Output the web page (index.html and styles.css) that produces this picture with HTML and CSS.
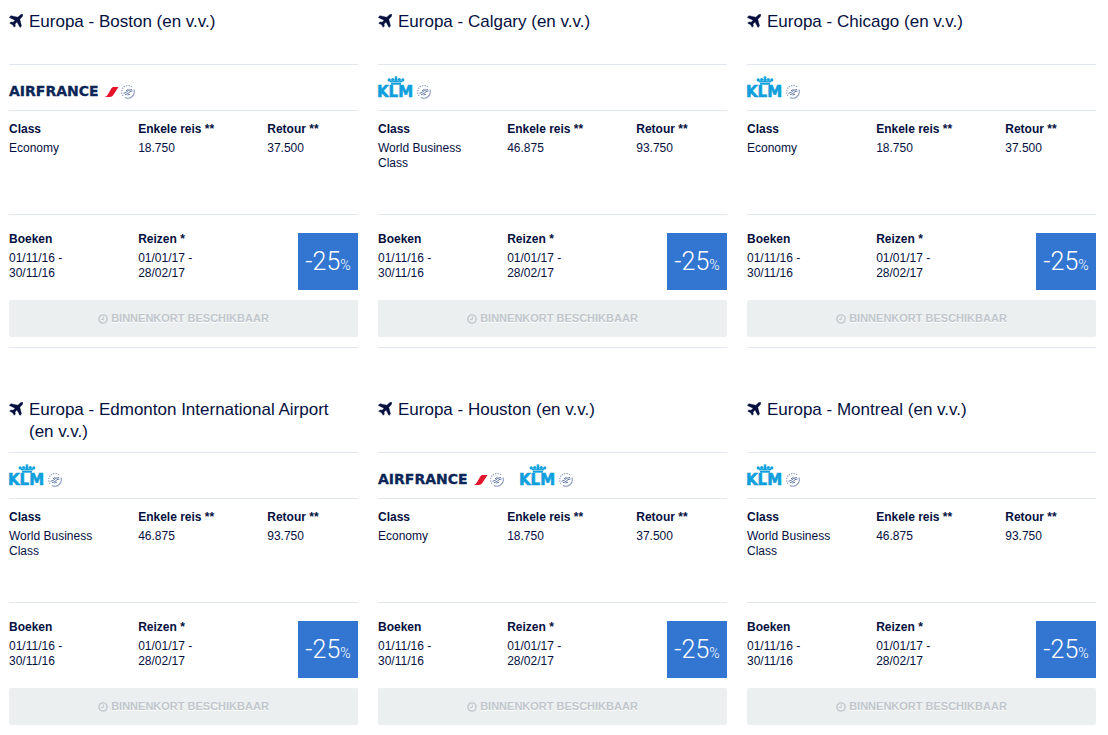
FILE: index.html
```html
<!DOCTYPE html>
<html lang="nl">
<head>
<meta charset="utf-8">
<title>Promo Awards</title>
<link rel="stylesheet" href="styles.css">
</head>
<body>
<svg class="sprite" aria-hidden="true">
  <symbol id="plane" viewBox="0 0 14 14">
    <path d="M13.700.3c.5 1-.2 2.200-1 3L10.800 5.200l1.700 6.800-1.500 1.400-3-5.300-2 1.900.4 2.100-1.200 1.200-1.600-2.600L.7 9.200l1.200-1.300 2.200.3 2-2L.3 3.400 1.900 1.700l6.900 1.500 2-1.800C11.600.6 12.900-.1 13.700.3z" stroke="#05103f" stroke-width=".4"/>
  </symbol>
  <symbol id="clock" viewBox="0 0 10 10">
    <circle cx="5" cy="5" r="4.100" fill="none" stroke="currentColor" stroke-width="1.400"/>
    <path d="M5.300 2.500v3H3" fill="none" stroke="currentColor" stroke-width="1"/>
  </symbol>
  <symbol id="skyteam" viewBox="0 0 15 15">
    <g fill="none" stroke="#8d9fc0">
      <path d="M13.900 5.500A6.400 6.400 0 0 1 5 13.400" stroke-width="1.100"/>
      <path d="M3 11.800A6.400 6.400 0 0 1 12.200 3" stroke-width="1.200" stroke-dasharray="1.300 1.100"/>
      <path d="M3.500 9.300 6.500 8.300 8.500 6.300l3.500-.8M5 10.800l3-1.300L10 7.600l2.500-.6M7.500 11l2.500-.8M6 6.800l2.500-1.500" stroke="#6177a5" stroke-width="1"/>
    </g>
  </symbol>
  <symbol id="af-accent" viewBox="0 0 16 10">
    <path d="M0 10c2-.2 2.800-1 4-2.800L7 2C7.800.6 8.500 0 10 0h4.500L9.500 7.800C8.400 9.500 7.500 10 5.500 10z" fill="#e4152b"/>
  </symbol>
  <symbol id="crown" viewBox="0 0 18 9">
    <g fill="#109fdc">
      <path d="M4 7h10v1.700H4z"/>
      <path d="M2.300 4.500h2.500L6 5.500l1-1h4l1 1 1.200-1h2.500L14.500 6.600h-11z"/>
      <circle cx="2.200" cy="3.900" r="1.600"/><circle cx="5.700" cy="3.600" r="1.500"/>
      <circle cx="12.300" cy="3.600" r="1.500"/><circle cx="15.800" cy="3.900" r="1.600"/>
      <circle cx="9" cy="3.400" r="1.600"/><path d="M8.500 0h1v.8h1v1h-1V3h-1V1.800h-1v-1h1z"/>
    </g>
  </symbol>
</svg>

<main class="offers">
  <article class="card">
    <h2 class="title"><svg class="plane" aria-hidden="true"><use href="#plane"/></svg>Europa - Boston (en v.v.)</h2>
    <div class="logos">
      <svg class="airfrance" viewBox="0 0 126 24" role="img" aria-label="Air France"><text x="0" y="20">AIRFRANCE</text><use href="#af-accent" x="95" y="11" width="16" height="10"/><use href="#skyteam" x="111" y="8" width="15" height="15"/></svg>
    </div>
    <div class="facts fares">
      <dl><dt>Class</dt><dd>Economy</dd></dl>
      <dl><dt>Enkele reis **</dt><dd>18.750</dd></dl>
      <dl><dt>Retour **</dt><dd>37.500</dd></dl>
    </div>
    <div class="facts dates">
      <dl><dt>Boeken</dt><dd>01/11/16 -<br>30/11/16</dd></dl>
      <dl><dt>Reizen *</dt><dd>01/01/17 -<br>28/02/17</dd></dl>
      <p class="badge">-25<small>%</small></p>
    </div>
    <button class="soon" type="button"><svg class="clock" aria-hidden="true"><use href="#clock"/></svg>BINNENKORT BESCHIKBAAR</button>
  </article>

  <article class="card">
    <h2 class="title"><svg class="plane" aria-hidden="true"><use href="#plane"/></svg>Europa - Calgary (en v.v.)</h2>
    <div class="logos">
      <svg class="klm" viewBox="0 0 54 24" role="img" aria-label="KLM"><use href="#crown" x="9" y="0" width="18" height="9"/><text x="-1" y="21">KLM</text><use href="#skyteam" x="38" y="8" width="15" height="15"/></svg>
    </div>
    <div class="facts fares">
      <dl><dt>Class</dt><dd>World Business Class</dd></dl>
      <dl><dt>Enkele reis **</dt><dd>46.875</dd></dl>
      <dl><dt>Retour **</dt><dd>93.750</dd></dl>
    </div>
    <div class="facts dates">
      <dl><dt>Boeken</dt><dd>01/11/16 -<br>30/11/16</dd></dl>
      <dl><dt>Reizen *</dt><dd>01/01/17 -<br>28/02/17</dd></dl>
      <p class="badge">-25<small>%</small></p>
    </div>
    <button class="soon" type="button"><svg class="clock" aria-hidden="true"><use href="#clock"/></svg>BINNENKORT BESCHIKBAAR</button>
  </article>

  <article class="card">
    <h2 class="title"><svg class="plane" aria-hidden="true"><use href="#plane"/></svg>Europa - Chicago (en v.v.)</h2>
    <div class="logos">
      <svg class="klm" viewBox="0 0 54 24" role="img" aria-label="KLM"><use href="#crown" x="9" y="0" width="18" height="9"/><text x="-1" y="21">KLM</text><use href="#skyteam" x="38" y="8" width="15" height="15"/></svg>
    </div>
    <div class="facts fares">
      <dl><dt>Class</dt><dd>Economy</dd></dl>
      <dl><dt>Enkele reis **</dt><dd>18.750</dd></dl>
      <dl><dt>Retour **</dt><dd>37.500</dd></dl>
    </div>
    <div class="facts dates">
      <dl><dt>Boeken</dt><dd>01/11/16 -<br>30/11/16</dd></dl>
      <dl><dt>Reizen *</dt><dd>01/01/17 -<br>28/02/17</dd></dl>
      <p class="badge">-25<small>%</small></p>
    </div>
    <button class="soon" type="button"><svg class="clock" aria-hidden="true"><use href="#clock"/></svg>BINNENKORT BESCHIKBAAR</button>
  </article>

  <article class="card">
    <h2 class="title"><svg class="plane" aria-hidden="true"><use href="#plane"/></svg>Europa - Edmonton International Airport (en v.v.)</h2>
    <div class="logos">
      <svg class="klm" viewBox="0 0 54 24" role="img" aria-label="KLM"><use href="#crown" x="9" y="0" width="18" height="9"/><text x="-1" y="21">KLM</text><use href="#skyteam" x="38" y="8" width="15" height="15"/></svg>
    </div>
    <div class="facts fares">
      <dl><dt>Class</dt><dd>World Business Class</dd></dl>
      <dl><dt>Enkele reis **</dt><dd>46.875</dd></dl>
      <dl><dt>Retour **</dt><dd>93.750</dd></dl>
    </div>
    <div class="facts dates">
      <dl><dt>Boeken</dt><dd>01/11/16 -<br>30/11/16</dd></dl>
      <dl><dt>Reizen *</dt><dd>01/01/17 -<br>28/02/17</dd></dl>
      <p class="badge">-25<small>%</small></p>
    </div>
    <button class="soon" type="button"><svg class="clock" aria-hidden="true"><use href="#clock"/></svg>BINNENKORT BESCHIKBAAR</button>
  </article>

  <article class="card">
    <h2 class="title"><svg class="plane" aria-hidden="true"><use href="#plane"/></svg>Europa - Houston (en v.v.)</h2>
    <div class="logos">
      <svg class="airfrance" viewBox="0 0 126 24" role="img" aria-label="Air France"><text x="0" y="20">AIRFRANCE</text><use href="#af-accent" x="95" y="11" width="16" height="10"/><use href="#skyteam" x="111" y="8" width="15" height="15"/></svg>
      <svg class="klm" viewBox="0 0 54 24" role="img" aria-label="KLM"><use href="#crown" x="9" y="0" width="18" height="9"/><text x="-1" y="21">KLM</text><use href="#skyteam" x="38" y="8" width="15" height="15"/></svg>
    </div>
    <div class="facts fares">
      <dl><dt>Class</dt><dd>Economy</dd></dl>
      <dl><dt>Enkele reis **</dt><dd>18.750</dd></dl>
      <dl><dt>Retour **</dt><dd>37.500</dd></dl>
    </div>
    <div class="facts dates">
      <dl><dt>Boeken</dt><dd>01/11/16 -<br>30/11/16</dd></dl>
      <dl><dt>Reizen *</dt><dd>01/01/17 -<br>28/02/17</dd></dl>
      <p class="badge">-25<small>%</small></p>
    </div>
    <button class="soon" type="button"><svg class="clock" aria-hidden="true"><use href="#clock"/></svg>BINNENKORT BESCHIKBAAR</button>
  </article>

  <article class="card">
    <h2 class="title"><svg class="plane" aria-hidden="true"><use href="#plane"/></svg>Europa - Montreal (en v.v.)</h2>
    <div class="logos">
      <svg class="klm" viewBox="0 0 54 24" role="img" aria-label="KLM"><use href="#crown" x="9" y="0" width="18" height="9"/><text x="-1" y="21">KLM</text><use href="#skyteam" x="38" y="8" width="15" height="15"/></svg>
    </div>
    <div class="facts fares">
      <dl><dt>Class</dt><dd>World Business Class</dd></dl>
      <dl><dt>Enkele reis **</dt><dd>46.875</dd></dl>
      <dl><dt>Retour **</dt><dd>93.750</dd></dl>
    </div>
    <div class="facts dates">
      <dl><dt>Boeken</dt><dd>01/11/16 -<br>30/11/16</dd></dl>
      <dl><dt>Reizen *</dt><dd>01/01/17 -<br>28/02/17</dd></dl>
      <p class="badge">-25<small>%</small></p>
    </div>
    <button class="soon" type="button"><svg class="clock" aria-hidden="true"><use href="#clock"/></svg>BINNENKORT BESCHIKBAAR</button>
  </article>
</main>
</body>
</html>
```
FILE: styles.css
```css
* {
  box-sizing: border-box;
}

body {
  margin: 0;
  background: #fff;
  color: #05103f;
  font: 12px/15px "Liberation Sans", Arial, sans-serif;
}

.sprite {
  position: absolute;
  width: 0;
  height: 0;
}

.offers {
  display: grid;
  grid-template-columns: repeat(3, 1fr);
  gap: 50px 20px;
  padding: 10px 12px 0 9px;
}

.card {
  padding-bottom: 10px;
  border-bottom: 1px solid #e2e7ee;
}

.card:nth-child(n + 4) {
  border-bottom: 0;
}

.title {
  display: grid;
  grid-template-columns: 14px 1fr;
  gap: 6px;
  align-content: start;
  min-height: 54px;
  margin: 0;
  padding: 1px 16px 0 0;
  font-size: 17px;
  font-weight: 400;
  line-height: 22px;
}

.plane {
  width: 14px;
  height: 14px;
  margin-top: 3px;
  fill: #05103f;
}

.logos {
  display: flex;
  gap: 16px;
  height: 47px;
  padding-top: 11px;
  border: solid #e2e7ee;
  border-width: 1px 0;
}

.airfrance {
  width: 126px;
  height: 24px;
  fill: #0b2656;
  font: bold 14px "DejaVu Sans", sans-serif;
  overflow: visible;
}

.klm {
  width: 54px;
  height: 24px;
  fill: #109fdc;
  font: bold 15px "DejaVu Sans", sans-serif;
  overflow: visible;
}

.airfrance text {
  stroke: #0b2656;
  stroke-width: 0.3;
}

.klm text {
  stroke: #109fdc;
  stroke-width: 0.6;
}

.facts {
  display: grid;
  grid-template-columns: 37% 37% 26%;
}

.fares {
  min-height: 104px;
  padding-top: 11px;
  border-bottom: 1px solid #e2e7ee;
}

.dates {
  padding: 17px 0 10px;
}

dl {
  margin: 0;
  padding-right: 20px;
}

dt {
  margin-bottom: 4px;
  font-weight: 700;
  white-space: nowrap;
}

dd {
  margin: 0;
}

.badge {
  justify-self: end;
  width: 60px;
  height: 57px;
  margin: 1px 0 0;
  background: #3276d2;
  color: #fff;
  font: 300 25px/58px Roboto, "Liberation Sans", sans-serif;
  text-align: center;
}

.badge small {
  font-size: 14px;
}

.soon {
  display: flex;
  align-items: center;
  justify-content: center;
  gap: 3px;
  width: 100%;
  height: 37px;
  padding: 0;
  border: 0;
  border-radius: 2px;
  background: #ebefef;
  color: #c0c6cc;
  font: bold 11px/15px "Liberation Sans", Arial, sans-serif;
  text-shadow: 0 1px 0 #fff;
}

.clock {
  width: 10px;
  height: 10px;
}
```
